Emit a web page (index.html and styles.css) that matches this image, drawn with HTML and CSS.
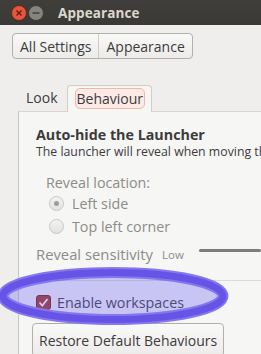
FILE: index.html
```html
<!DOCTYPE html>
<html lang="en">

<head>
    <meta charset="UTF-8">
    <meta name="viewport" content="width=device-width, initial-scale=1.0">
    <title>Appearance</title>
    <link rel="stylesheet" href="styles.css">
</head>

<body>
    <div class="window">
        <!-- Title bar -->
        <header class="titlebar">
            <svg class="win-buttons" width="36" height="18" viewBox="0 0 36 18">
                <circle cx="9" cy="9" r="7.5" fill="#e9553a" stroke="#5a2a1c" stroke-width="1"/>
                <path d="M6.5 6.5 L11.5 11.5 M11.5 6.5 L6.5 11.5" stroke="#5b1f10" stroke-width="1.4"/>
                <circle cx="26" cy="9" r="7.5" fill="#858580" stroke="#3a3a36" stroke-width="1"/>
                <path d="M22.5 9 H29.5" stroke="#3c3c38" stroke-width="1.4"/>
            </svg>
            <span class="title">Appearance</span>
        </header>

        <div class="content">
            <!-- Breadcrumb -->
            <nav class="crumbs">
                <button class="crumb">All Settings</button>
                <button class="crumb">Appearance</button>
            </nav>

            <!-- Notebook -->
            <div class="notebook">
                <div class="tabs">
                    <span class="tab">Look</span>
                    <span class="tab active"><span class="focus">Behaviour</span></span>
                </div>
                <div class="panel">
                    <h3>Auto-hide the Launcher</h3>
                    <p class="desc">The launcher will reveal when moving the pointer to the defined hot spot.</p>

                    <div class="reveal disabled">
                        <div class="reveal-label">Reveal location:</div>
                        <label class="radio"><span class="dot checked"></span>Left side</label>
                        <label class="radio"><span class="dot"></span>Top left corner</label>
                    </div>

                    <div class="sensitivity disabled">
                        <span>Reveal sensitivity</span>
                        <span class="low">Low</span>
                        <span class="slider"></span>
                    </div>

                    <div class="separator"></div>

                    <label class="check">
                        <span class="box">
                            <svg width="11" height="11" viewBox="0 0 11 11">
                                <path d="M1.5 5.5 L4.3 8.5 L9.5 2" fill="none" stroke="#fff" stroke-width="1.8"/>
                            </svg>
                        </span>
                        Enable workspaces
                    </label>

                    <button class="restore">Restore Default Behaviours</button>
                </div>
            </div>
        </div>

        <!-- Highlight drawn over the screenshot -->
        <svg class="highlight" width="240" height="70" viewBox="0 0 240 70">
            <ellipse cx="117" cy="34" rx="110" ry="23.5" fill="rgba(110,100,240,0.34)" stroke="#8577ef" stroke-width="11"/>
            <ellipse cx="117" cy="34" rx="110" ry="23.5" fill="none" stroke="#6654e6" stroke-width="7"/>
        </svg>
    </div>
</body>

</html>
```

FILE: styles.css
```css
:root {
    --window-bg: #efeeec;
    --panel-bg: #f6f6f5;
    --border: #bcb9b3;
    --text: #3c3c3c;
    --disabled: #8c8c89;
}

* {
    margin: 0;
    padding: 0;
    box-sizing: border-box;
}

body {
    font-family: 'Open Sans', 'Noto Sans', sans-serif;
    background-color: var(--window-bg);
    color: var(--text);
    width: 261px;
    height: 354px;
    overflow: hidden;
}

.window {
    position: relative;
    width: 261px;
    height: 354px;
    overflow: hidden;
    white-space: nowrap;
}

/* Title bar */
.titlebar {
    height: 25px;
    background: linear-gradient(#3f3e3a, #3a3935);
    display: flex;
    align-items: center;
    padding-left: 10px;
    gap: 12px;
}

.title {
    color: #dcd8cf;
    font-weight: bold;
    font-size: 13.5px;
    letter-spacing: 0.1px;
}

/* Breadcrumb */
.content {
    padding: 8px 0 0 12px;
}

.crumbs {
    display: inline-flex;
    border: 1px solid #b3b0aa;
    border-radius: 4px;
    background: linear-gradient(#f9f9f8, #ecebe9);
    height: 26px;
}

.crumb {
    font-family: inherit;
    font-size: 14px;
    color: var(--text);
    background: none;
    border: none;
    padding: 0 7px;
}

.crumb + .crumb {
    border-left: 1px solid #cfccc6;
}

/* Notebook */
.notebook {
    margin-top: 25px;
    margin-left: 6px;
}

.tabs {
    display: flex;
    align-items: flex-end;
    height: 27px;
    padding-left: 1px;
}

.tab {
    font-size: 14px;
    padding: 0 9px 4px 7px;
}

.tab.active {
    background: var(--panel-bg);
    border: 1px solid #d1cec8;
    border-bottom: none;
    border-radius: 4px 4px 0 0;
    padding: 2px 6px 0 7px;
    height: 27px;
    margin-bottom: -1px;
    position: relative;
}

.focus {
    display: block;
    border: 1px solid #f0b8a6;
    background: #fbeae5;
    border-radius: 5px;
    padding: 0 1px;
    line-height: 19px;
}

.panel {
    background: var(--panel-bg);
    border-top: 1px solid #d8d5d0;
    border-left: 1px solid #c8c5bf;
    height: 260px;
    padding: 13px 0 0 17px;
}

.panel h3 {
    font-size: 14.3px;
    font-weight: bold;
    line-height: 19px;
}

.desc {
    font-size: 12.3px;
    line-height: 16px;
}

/* Reveal options */
.disabled {
    color: var(--disabled);
}

.reveal {
    margin-top: 14px;
    padding-left: 10px;
}

.reveal-label {
    font-size: 14.3px;
    line-height: 18px;
}

.radio {
    display: flex;
    align-items: center;
    gap: 8px;
    font-size: 14.3px;
    height: 23px;
    padding-left: 3px;
}

.dot {
    width: 15px;
    height: 15px;
    border-radius: 50%;
    border: 1px solid #c9c7c3;
    background: linear-gradient(#f3f3f2, #e3e2e0);
    display: flex;
    align-items: center;
    justify-content: center;
}

.dot.checked::after {
    content: "";
    width: 5px;
    height: 5px;
    border-radius: 50%;
    background: #9c9c99;
}

.sensitivity {
    display: flex;
    align-items: center;
    margin-top: 6px;
    font-size: 14.8px;
    height: 20px;
}

.low {
    font-size: 11.5px;
    margin-left: 9px;
}

.slider {
    width: 70px;
    height: 3px;
    border-radius: 2px;
    background: #7d7d7a;
    margin-left: 15px;
    margin-top: -8px;
}

.separator {
    height: 1px;
    background: #dcdad6;
    margin: 16px 0 0 -17px;
}

/* Checkbox */
.check {
    display: flex;
    align-items: center;
    gap: 6px;
    font-size: 14.3px;
    height: 30px;
    margin-top: 6px;
}

.box {
    width: 15px;
    height: 15px;
    border-radius: 3px;
    background: #a8361f;
    border: 1px solid #6e2010;
    display: flex;
    align-items: center;
    justify-content: center;
}

.restore {
    font-family: inherit;
    font-size: 14px;
    color: var(--text);
    border: 1px solid #b3b0aa;
    border-radius: 4px;
    background: linear-gradient(#f9f9f8, #ecebe9);
    height: 34px;
    padding: 0 6px;
    margin-top: 6px;
    margin-left: -4px;
}

/* Annotation ellipse */
.highlight {
    position: absolute;
    left: -4px;
    top: 262px;
}
```
